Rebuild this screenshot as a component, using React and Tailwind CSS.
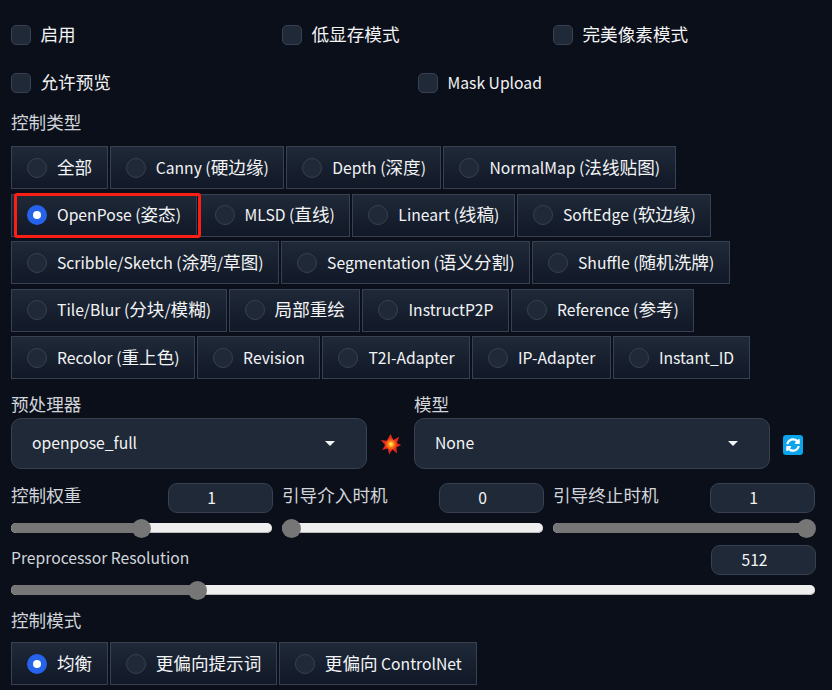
import { FaSyncAlt } from 'react-icons/fa'

const rows = [
  ['全部', 'Canny (硬边缘)', 'Depth (深度)', 'NormalMap (法线贴图)'],
  ['OpenPose (姿态)', 'MLSD (直线)', 'Lineart (线稿)', 'SoftEdge (软边缘)'],
  ['Scribble/Sketch (涂鸦/草图)', 'Segmentation (语义分割)', 'Shuffle (随机洗牌)'],
  ['Tile/Blur (分块/模糊)', '局部重绘', 'InstructP2P', 'Reference (参考)'],
  ['Recolor (重上色)', 'Revision', 'T2I-Adapter', 'IP-Adapter', 'Instant_ID'],
]

// the CJK glyphs sit larger than the latin ones in this UI
function Mixed({ text }) {
  return text.split(/([\u4e00-\u9fff]+)/).map((part, i) =>
    /[\u4e00-\u9fff]/.test(part)
      ? <span key={i} className="text-[17.6px] leading-[24px]">{part}</span>
      : <span key={i} className="text-[15.7px] leading-[24px]">{part}</span>
  )
}

function Check({ label }) {
  return (
    <label className="flex items-center gap-[9.5px] h-5">
      <span className="w-5 h-5 rounded-[5px] border border-[#374151] bg-[#1f2937]" />
      <span className="h-6 -mt-[2px] text-[#f3f4f6]"><Mixed text={label} /></span>
    </label>
  )
}

function RadioItem({ label, checked }) {
  return (
    <div className="h-[43px] flex items-center gap-[10px] pl-[15px] pr-[14.5px] border border-[#374151] bg-gradient-to-b from-[#1f2937] to-[#111827] text-[#f3f4f6] whitespace-nowrap">
      <span className={`w-5 h-5 rounded-full flex items-center justify-center ${checked ? 'bg-[#2563eb]' : 'bg-[#1f2937] border border-[#374151]'}`}>
        {checked && <span className="w-2 h-2 rounded-full bg-white" />}
      </span>
      <span className="h-6 -mt-[2px]"><Mixed text={label} /></span>
    </div>
  )
}

function Select({ value }) {
  return (
    <div className="h-[51px] flex-1 flex items-center justify-between pl-[20px] pr-[31px] rounded-[10px] border border-[#374151] bg-[#1f2937] text-[#f3f4f6]">
      <span className="text-[15.7px] -mt-[2px]">{value}</span>
      <svg width="10" height="5" viewBox="0 0 10 5"><path d="M0 0h10L5 5z" fill="#f3f4f6" /></svg>
    </div>
  )
}

function NumberBox({ value, className = '-mr-px' }) {
  return (
    <div className={`w-[105px] h-[30px] flex items-center justify-center pr-[18px] rounded-[9px] border border-[#374151] bg-[#1f2937] text-[15.7px] text-[#f3f4f6] ${className}`}>
      {value}
    </div>
  )
}

function Slider({ pct }) {
  return (
    <div className="relative h-[10px] rounded-[5px] bg-[#efefef] shadow-[inset_0_-1px_0_#bbbbbb]">
      <div className="h-full rounded-l-[5px] bg-[#767676]" style={{ width: `${pct}%` }} />
      <span
        className="absolute top-1/2 w-[19px] h-[19px] -mt-[9.5px] -ml-[9.5px] rounded-full bg-[#767676]"
        style={{ left: `${pct}%` }}
      />
    </div>
  )
}

function SliderCol({ label, value, pct, boxClass }) {
  return (
    <div>
      <div className="flex items-start justify-between h-[40px] text-[#d1d5db]">
        <Label text={label} />
        <NumberBox value={value} className={boxClass} />
      </div>
      <Slider pct={pct} />
    </div>
  )
}

function Label({ text, className = '' }) {
  return <p className={`h-6 text-[#d1d5db] leading-[24px] ${className}`}><Mixed text={text} /></p>
}

export default function App() {
  return (
    <div
      className="relative w-[832px] h-[690px] overflow-hidden bg-[#0b0f19] pl-[11px] pr-[17px]"
      style={{ fontFamily: '"Noto Sans CJK SC", "Noto Sans", sans-serif' }}
    >
      <div className="grid grid-cols-[271px_271px_1fr] pt-[25px] h-[58px]">
        <Check label="启用" />
        <Check label="低显存模式" />
        <Check label="完美像素模式" />
      </div>
      <div className="grid grid-cols-[407px_1fr] items-center h-[50px]">
        <Check label="允许预览" />
        <Check label="Mask Upload" />
      </div>

      <Label text="控制类型" className="mt-[2px]" />
      <div className="flex flex-col gap-[4.5px] mt-[12px]">
        {rows.map((row, i) => (
          <div key={i} className="flex gap-[2px]">
            {row.map(label => (
              <RadioItem key={label} label={label} checked={label.startsWith('OpenPose')} />
            ))}
          </div>
        ))}
      </div>

      <div className="flex mt-[13px]">
        <div className="w-[356px]">
          <Label text="预处理器" className="mb-[2px]" />
          <div className="flex"><Select value="openpose_full" /></div>
        </div>
        <div className="w-[47px] flex items-end justify-center pb-[14px]">
          <svg width="22" height="22" viewBox="0 0 24 24">
            <defs>
              <radialGradient id="boom" cx="0.5" cy="0.5" r="0.5">
                <stop offset="0.1" stopColor="#fde047" />
                <stop offset="0.32" stopColor="#f97316" />
                <stop offset="0.62" stopColor="#e5261c" />
              </radialGradient>
            </defs>
            <path d="M11.500 1L14.500 7.500l6.500-3.500-2.500 7L23 13l-5 2.500 .5 6.500-5-4L10 23.500 8.500 17 2.500 18.500 5.500 13 1 7.500l6.500 1z" fill="url(#boom)" />
          </svg>
        </div>
        <div className="w-[356px]">
          <Label text="模型" className="mb-[2px]" />
          <div className="flex"><Select value="None" /></div>
        </div>
        <div className="flex-1 flex items-end pb-[14px] pl-[13px]">
          <span className="w-5 h-5 rounded-[3px] bg-[#0ca4ea] flex items-center justify-center text-white">
            <FaSyncAlt size={14} />
          </span>
        </div>
      </div>

      <div className="grid grid-cols-[261px_261px_1fr] gap-[10px] mt-[14px]">
        <SliderCol label="控制权重" value="1" pct={50} />
        <SliderCol label="引导介入时机" value="0" pct={3.8} />
        <SliderCol label="引导终止时机" value="1" pct={96.7} boxClass="mr-0" />
      </div>

      <div className="flex items-start justify-between mt-[12px] h-[40px] text-[#d1d5db]">
        <Label text="Preprocessor Resolution" />
        <NumberBox value="512" />
      </div>
      <Slider pct={23.2} />

      <Label text="控制模式" className="mt-[13px]" />
      <div className="flex gap-[2px] mt-[10px]">
        <RadioItem label="均衡" checked />
        <RadioItem label="更偏向提示词" />
        <RadioItem label="更偏向 ControlNet" />
      </div>

      {/* red annotation around the OpenPose option */}
      <div className="absolute left-[14px] top-[193px] w-[187px] h-[45px] border-[3px] border-[#fa1e14] rounded-[3px]" />
    </div>
  )
}
